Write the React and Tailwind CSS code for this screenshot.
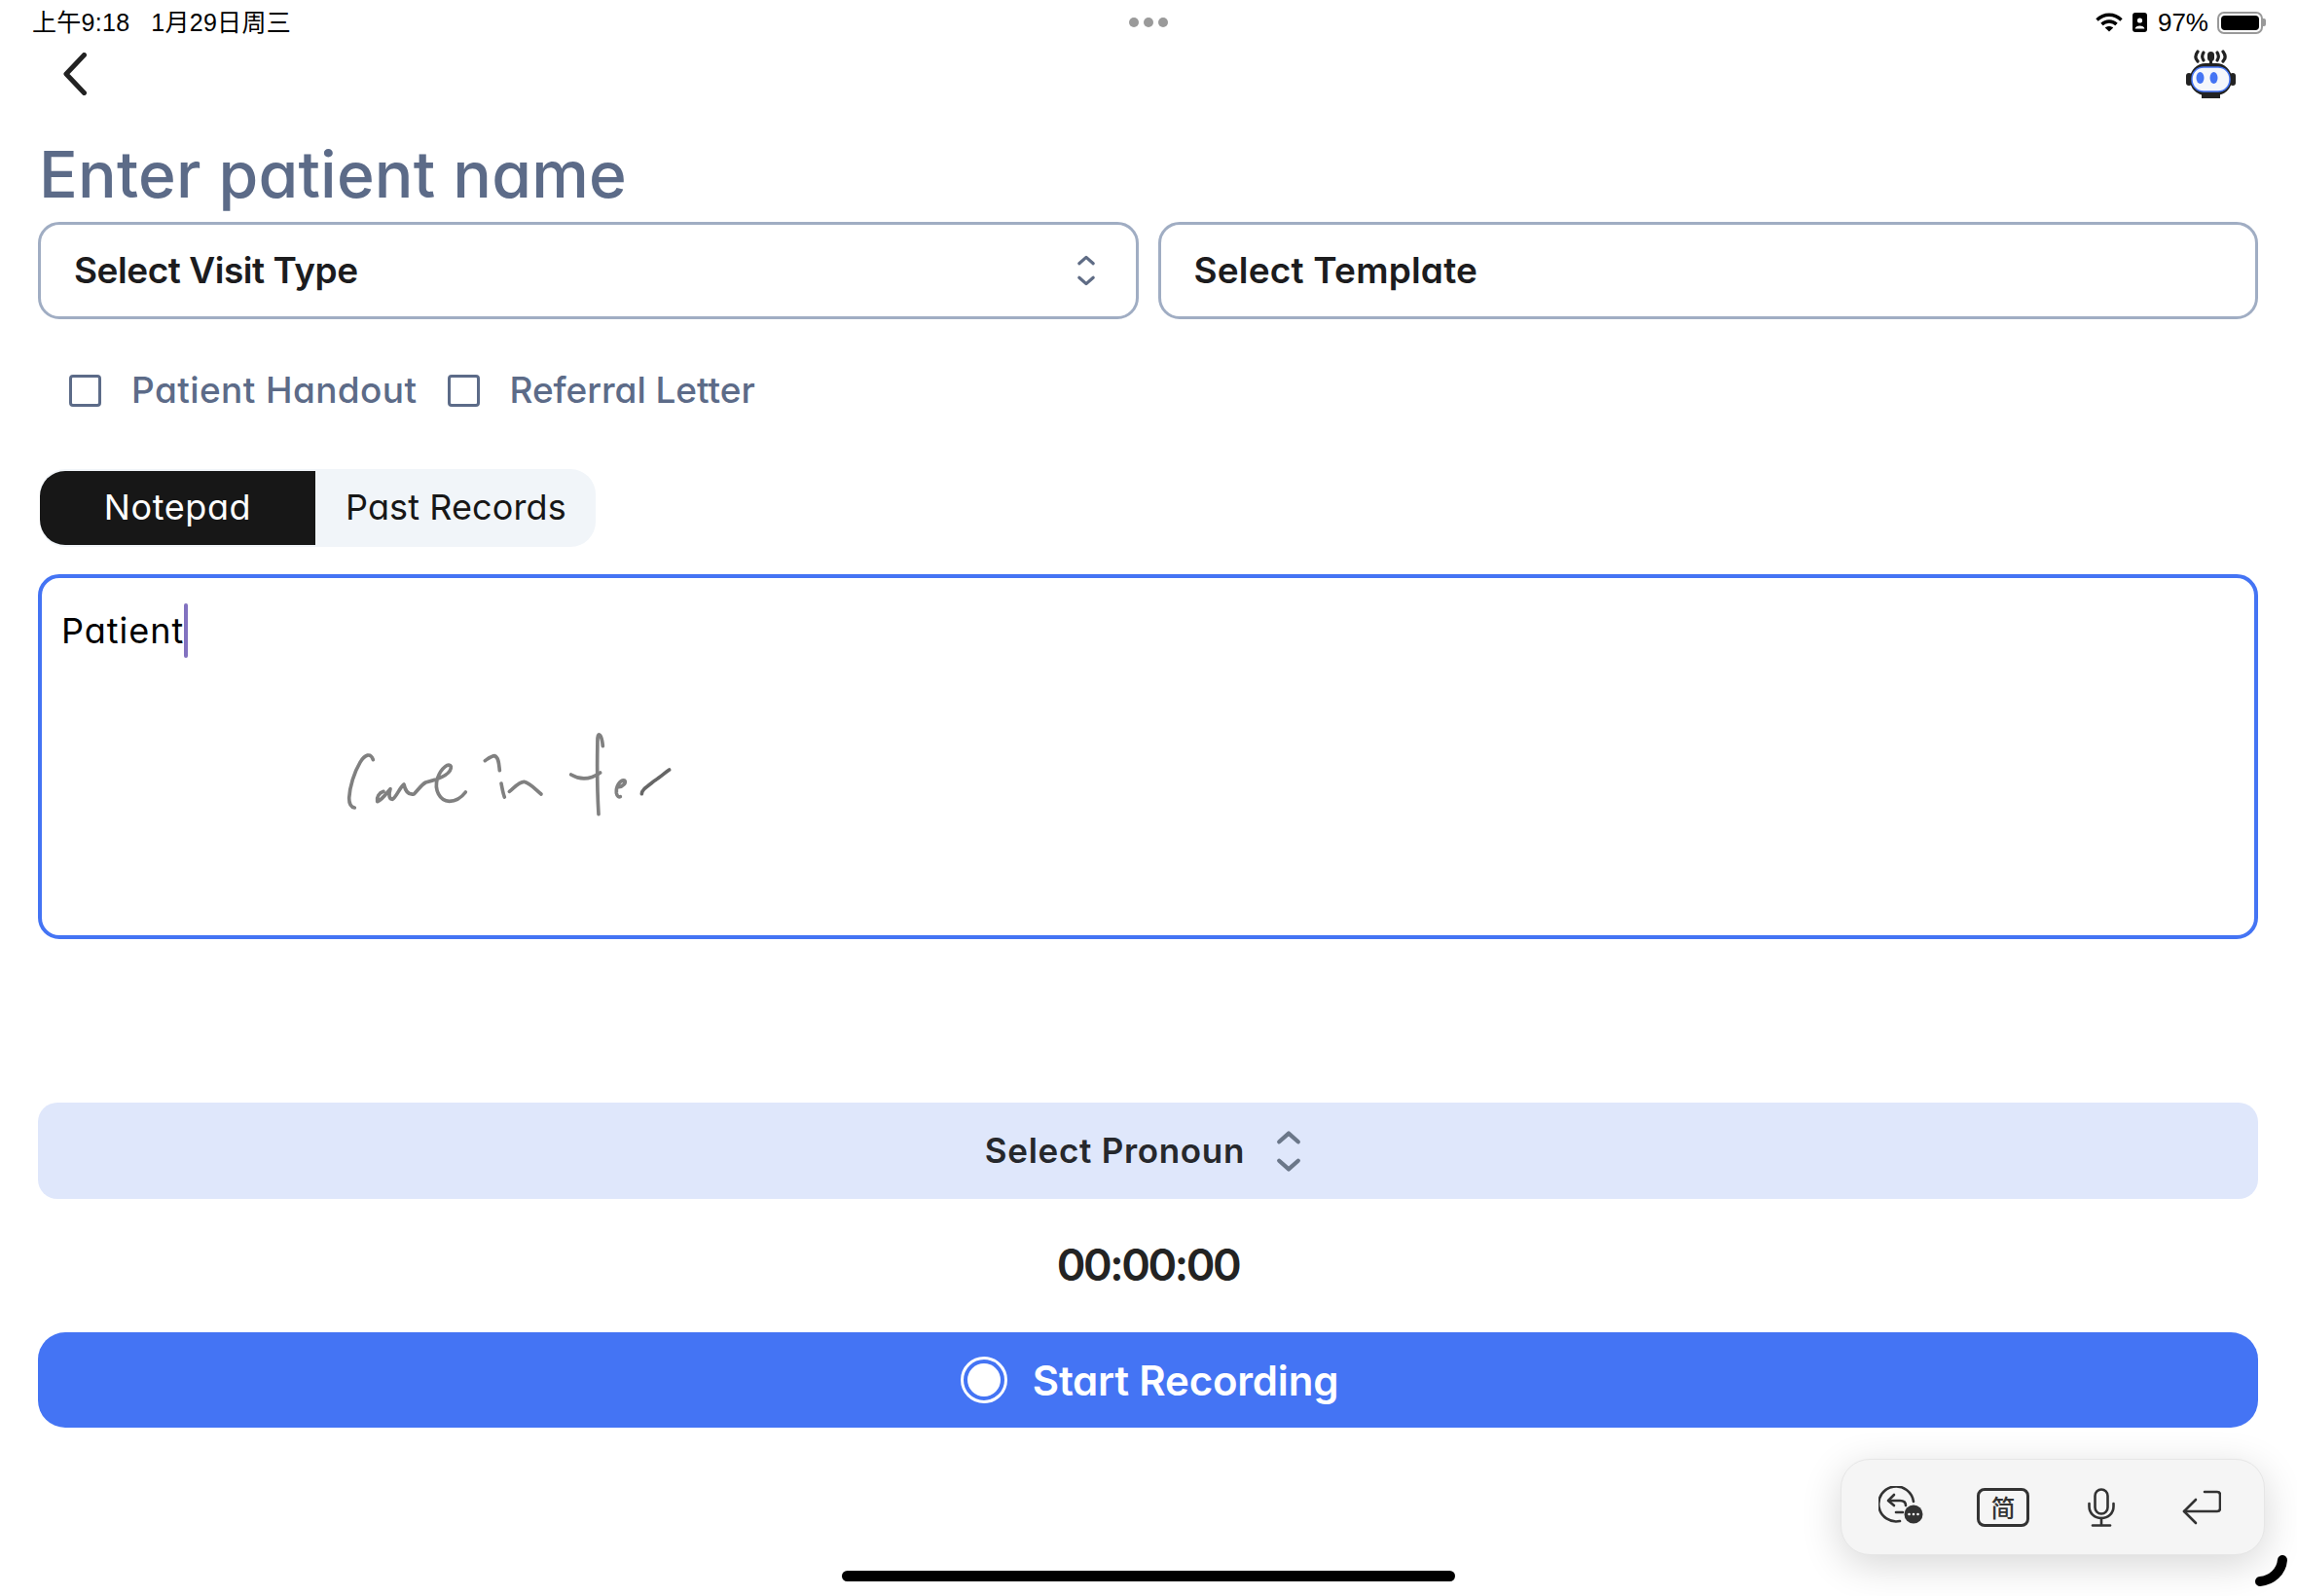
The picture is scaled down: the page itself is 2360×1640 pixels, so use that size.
import React from "react";

const Chevrons = ({className}) => (
    <svg viewBox="0 0 24 40" fill="none" stroke="currentColor" strokeWidth="4" strokeLinecap="round" strokeLinejoin="round" className={className}>
        <path d="M3 11 L12 3 L21 11"/>
        <path d="M3 29 L12 37 L21 29"/>
    </svg>
);

const Wifi = () => (
    <svg viewBox="0 0 28 20" className="w-[28px] h-[20px]" fill="none" stroke="#000" strokeWidth="3.4">
        <path d="M1.5 7.5 C8.5 0.5 19.5 0.5 26.5 7.5"/>
        <path d="M6.5 12 C10.5 8 17.5 8 21.5 12"/>
        <path d="M14 19.5 L9.8 15.6 C12 13.6 16 13.6 18.2 15.6 Z" fill="#000" stroke="none"/>
    </svg>
);

const PortraitLock = () => (
    <svg viewBox="0 0 15 20" className="w-[15px] h-[20px] ml-[10px]">
        <rect width="15" height="20" rx="3" fill="#000"/>
        <circle cx="7.5" cy="8" r="2.6" fill="#fff"/>
        <path d="M2.6 16.5 C3 12.5 12 12.5 12.4 16.5 Z" fill="#fff"/>
    </svg>
);

const Robot = () => (
    <svg viewBox="0 0 51 50" className="w-[51px] h-[50px]">
        <g fill="none" stroke="#222" strokeWidth="3.2" strokeLinecap="round">
            <path d="M12 2 C9 6 9 9 12 12"/>
            <path d="M18 3 C16 6 16 8 18 11"/>
            <path d="M32 3 C34 6 34 8 32 11"/>
            <path d="M38 2 C41 6 41 9 38 12"/>
        </g>
        <rect x="22" y="2" width="7" height="10" rx="3.5" fill="#222"/>
        <rect x="24" y="10" width="3" height="5" fill="#222"/>
        <rect x="0" y="24" width="6" height="13" rx="3" fill="#222"/>
        <rect x="45" y="24" width="6" height="13" rx="3" fill="#222"/>
        <path d="M16 43 H35 V50 H16 Z" fill="#222"/>
        <rect x="4" y="14" width="43" height="33" rx="16" fill="#222"/>
        <rect x="6" y="18" width="39" height="25" rx="12" fill="#f5f7fc" stroke="#4474f4" strokeWidth="1.5"/>
        <ellipse cx="14.5" cy="29" rx="4" ry="6" fill="#4474f4"/>
        <ellipse cx="28.5" cy="29" rx="4" ry="6" fill="#4474f4"/>
    </svg>
);

const Handwriting = () => (
    <svg viewBox="0 0 1200 390" fill="none" stroke="#808080" strokeWidth="11" strokeLinecap="round" strokeLinejoin="round"
         className="absolute left-[277px] top-[126px] w-[400px] h-[130px]">
        <path d="M190 182 C182 160 165 165 150 190 C132 220 118 265 116 300 C116 318 122 328 133 330"/>
        <path d="M222 280 C208 284 200 298 203 311 C218 306 232 284 243 272 C238 288 238 304 250 304 C262 296 272 268 285 258 C288 272 296 292 316 288 C328 276 340 258 352 252 C385 244 432 228 430 203 C425 190 400 205 388 240 C378 275 395 308 425 310 C450 310 465 295 475 282"/>
        <path d="M535 185 C545 178 555 170 565 170 C578 175 578 200 580 215"/>
        <path d="M585 255 C588 270 590 285 595 297"/>
        <path d="M610 280 C625 268 640 250 655 250 C675 255 692 275 708 288"/>
        <path d="M885 350 C882 300 880 200 882 115 C884 95 895 105 898 140"/>
        <path d="M800 228 C820 240 850 250 890 222"/>
        <path d="M945 266 C958 268 972 252 965 246 C950 244 938 265 940 285 C942 295 948 298 952 296"/>
        <path d="M1018 287 C1018 275 1030 268 1060 245 C1075 235 1090 222 1103 213" stroke="#666"/>
    </svg>
);

const Checkbox = ({label, className, labelClass}) => (
    <div className={`flex items-center ${className}`}>
        <div className="w-[33px] h-[33px] rounded-[4px] border-[3px] border-[#5c6b88]"></div>
        <span className={`ml-[31px] text-[37px] font-medium text-[#5c6b88] ${labelClass}`}>{label}</span>
    </div>
);

const KeyboardBar = () => (
    <div className="absolute left-[1891px] top-[1499px] w-[436px] h-[99px] bg-[#f5f5f5] rounded-[30px] border border-[#e6e6e6] shadow-[0_10px_40px_rgba(0,0,0,0.16)] flex items-center text-[#333]">
        <svg viewBox="0 0 46 40" className="ml-[38px] w-[46px] h-[40px] mt-[-4px]" fill="none" stroke="#333" strokeWidth="2.6" strokeLinecap="round" strokeLinejoin="round">
            <path d="M36 16 A18 18 0 1 0 22 36"/>
            <path d="M16 9 L10 15 L16 20"/>
            <path d="M11 15 H22 C26 15 28 17 28 20"/>
            <path d="M18 27 H25"/>
            <circle cx="36" cy="29" r="9.5" fill="#333" stroke="none"/>
            <circle cx="31.5" cy="29" r="1.3" fill="#fff" stroke="none"/>
            <circle cx="36" cy="29" r="1.3" fill="#fff" stroke="none"/>
            <circle cx="40.5" cy="29" r="1.3" fill="#fff" stroke="none"/>
        </svg>
        <div className="ml-[55px] w-[54px] h-[40px] rounded-[8px] border-[3px] border-[#333] flex items-center justify-center text-[25px] font-medium font-['Noto_Sans_CJK_SC',sans-serif]">简</div>
        <svg viewBox="0 0 28 40" className="ml-[60px] w-[28px] h-[40px]" fill="none" stroke="#333" strokeWidth="2.6" strokeLinecap="round">
            <rect x="7.5" y="1.5" width="13" height="25" rx="6.5"/>
            <path d="M1.5 16 V19 C1.5 26 7 31 14 31 C21 31 26.5 26 26.5 19 V16"/>
            <path d="M14 31 V38"/>
            <path d="M5 38.5 H23"/>
        </svg>
        <svg viewBox="0 0 40 36" className="ml-[69px] w-[40px] h-[36px]" fill="none" stroke="#333" strokeWidth="2.6" strokeLinecap="round" strokeLinejoin="round">
            <path d="M23 2 H36 C38 2 39 3 39 5 V19 C39 21 38 22 36 22 H2"/>
            <path d="M14 10 L2 22 L14 34"/>
        </svg>
    </div>
);

const App = () => {
    return (
        <div className="relative w-[2360px] h-[1640px] overflow-hidden bg-white font-['Inter',sans-serif] [font-feature-settings:'cv11'] text-[#1c1c1e]">
            <div className="h-[46px] px-[33px] flex items-center justify-between text-black">
                <div className="w-[300px] pt-[2px] text-[25px] tracking-[0.3px] font-['Liberation_Sans','Noto_Sans_CJK_SC',sans-serif] whitespace-pre">上午9:18   1月29日周三</div>
                <div className="flex gap-[5px]">
                    <span className="w-[10px] h-[10px] rounded-full bg-[#9a9a9a]"></span>
                    <span className="w-[10px] h-[10px] rounded-full bg-[#9a9a9a]"></span>
                    <span className="w-[10px] h-[10px] rounded-full bg-[#9a9a9a]"></span>
                </div>
                <div className="w-[300px] flex items-center justify-end">
                    <Wifi/>
                    <PortraitLock/>
                    <span className="ml-[11px] text-[26px] font-['Liberation_Sans',sans-serif]">97%</span>
                    <div className="ml-[9px] w-[47px] h-[23px] rounded-[7px] border-2 border-[#999] p-[2px]">
                        <div className="w-full h-full rounded-[4px] bg-black"></div>
                    </div>
                    <div className="w-[3px] h-[8px] rounded-r-[2px] bg-[#999] mr-[-1px]"></div>
                </div>
            </div>

            <div className="pl-[39px] pr-[40px]">
                <div className="h-[60px] flex items-center justify-between">
                    <svg viewBox="0 0 24 44" className="ml-[26px] w-[24px] h-[44px]" fill="none" stroke="#222" strokeWidth="5" strokeLinecap="round" strokeLinejoin="round">
                        <path d="M21.5 2.5 L3 22 L21.5 41.5"/>
                    </svg>
                    <div className="mr-[23px]"><Robot/></div>
                </div>

                <h1 className="mt-[35px] ml-[1px] h-[76px] leading-[76px] text-[66px] font-medium tracking-[0.2px] text-[#5c6b88]">Enter patient name</h1>

                <div className="mt-[11px] grid grid-cols-2 gap-[20px]">
                    <div className="h-[100px] rounded-[22px] border-[3px] border-[#a0adc3] pl-[34px] pr-[41px] flex items-center justify-between">
                        <span className="text-[37px] font-semibold tracking-[-0.45px]">Select Visit Type</span>
                        <Chevrons className="w-[20px] h-[32px] text-[#5f6c85]"/>
                    </div>
                    <div className="h-[100px] rounded-[22px] border-[3px] border-[#a0adc3] pl-[34px] flex items-center">
                        <span className="text-[37px] font-semibold tracking-[0.2px]">Select Template</span>
                    </div>
                </div>

                <div className="mt-[53px] h-[40px] flex items-center">
                    <Checkbox label="Patient Handout" className="ml-[32px]" labelClass="tracking-[0.4px]"/>
                    <Checkbox label="Referral Letter" className="ml-[31px]" labelClass="tracking-[-0.05px]"/>
                </div>

                <div className="mt-[61px] ml-[2px] w-[571px] h-[80px] bg-[#f1f5f9] rounded-[26px] flex items-center text-[36px] pb-[1px]">
                    <div className="w-[283px] h-[76px] bg-[#171717] text-white rounded-l-[26px] flex items-center justify-center pb-[2px] tracking-[0.6px]">Notepad</div>
                    <div className="pl-[31px] pb-[2px] text-[#171717] tracking-[0.1px]">Past Records</div>
                </div>

                <div className="relative mt-[28px] h-[375px] rounded-[22px] border-4 border-[#4474f4] pl-[20px] pt-[26px]">
                    <div className="flex items-center h-[56px] text-[36px] text-black tracking-[1px]">
                        Patient
                        <span className="w-[4px] h-[56px] rounded-full bg-[#8272c0]"></span>
                    </div>
                    <Handwriting/>
                </div>

                <div className="mt-[168px] h-[99px] rounded-[20px] bg-[#dfe7fb] flex items-center justify-center pr-[10px]">
                    <span className="text-[35px] font-semibold text-[#26282c] tracking-[0.7px]">Select Pronoun</span>
                    <Chevrons className="ml-[32px] w-[26px] h-[44px] text-[#6b7789]"/>
                </div>

                <div className="mt-[36px] h-[64px] leading-[64px] text-center text-[45px] font-semibold tracking-[-2.4px] text-[#232323]">00:00:00</div>

                <div className="mt-[37px] h-[98px] rounded-[28px] bg-[#4474f4] flex items-center justify-center pl-[3px] text-white">
                    <div className="w-[48px] h-[48px] rounded-full border-[3px] border-white p-[4px]">
                        <div className="w-full h-full rounded-full bg-white"></div>
                    </div>
                    <span className="ml-[26px] text-[42px] font-semibold tracking-[-0.2px]">Start Recording</span>
                </div>
            </div>

            <KeyboardBar/>
            <div className="absolute left-[865px] top-[1614px] w-[630px] h-[11px] rounded-full bg-black"></div>
            <svg viewBox="0 0 36 34" fill="none" className="absolute left-[2316px] top-[1597px] w-[36px] h-[34px]">
                <path d="M29 6 C28 18 18 27 6 28" stroke="#000" strokeWidth="10" strokeLinecap="round"/>
            </svg>
        </div>
    );
};

export default App;
